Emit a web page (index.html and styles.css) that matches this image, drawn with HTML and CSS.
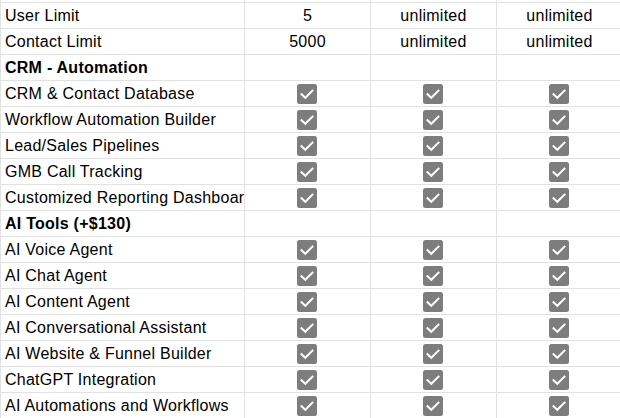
FILE: index.html
```html
<!DOCTYPE html>
<html>
<head>
<meta charset="utf-8">
<link rel="stylesheet" href="styles.css">
</head>
<body>
<svg class="defs" width="0" height="0" aria-hidden="true">
  <symbol id="chk" viewBox="0 0 20 20">
    <rect x="0" y="0" width="20" height="20" rx="2.5" fill="#7d7d7d"/>
    <polyline points="4.5,10.2 8.3,13.8 15.5,6.6" fill="none" stroke="#fff" stroke-width="2" stroke-linecap="square"/>
  </symbol>
</svg>
<div class="sheet">
  <div class="row stub"><div class="c"></div><div class="c"></div><div class="c"></div><div class="c"></div></div>
  <div class="row"><div class="c label">User Limit</div><div class="c val">5</div><div class="c val">unlimited</div><div class="c val">unlimited</div></div>
  <div class="row"><div class="c label">Contact Limit</div><div class="c val">5000</div><div class="c val">unlimited</div><div class="c val">unlimited</div></div>
  <div class="row"><div class="c label bold">CRM - Automation</div><div class="c"></div><div class="c"></div><div class="c"></div></div>
  <div class="row"><div class="c label">CRM &amp; Contact Database</div><div class="c val"><svg class="box"><use href="#chk"/></svg></div><div class="c val"><svg class="box"><use href="#chk"/></svg></div><div class="c val"><svg class="box"><use href="#chk"/></svg></div></div>
  <div class="row"><div class="c label">Workflow Automation Builder</div><div class="c val"><svg class="box"><use href="#chk"/></svg></div><div class="c val"><svg class="box"><use href="#chk"/></svg></div><div class="c val"><svg class="box"><use href="#chk"/></svg></div></div>
  <div class="row"><div class="c label">Lead/Sales Pipelines</div><div class="c val"><svg class="box"><use href="#chk"/></svg></div><div class="c val"><svg class="box"><use href="#chk"/></svg></div><div class="c val"><svg class="box"><use href="#chk"/></svg></div></div>
  <div class="row"><div class="c label">GMB Call Tracking</div><div class="c val"><svg class="box"><use href="#chk"/></svg></div><div class="c val"><svg class="box"><use href="#chk"/></svg></div><div class="c val"><svg class="box"><use href="#chk"/></svg></div></div>
  <div class="row"><div class="c label">Customized Reporting Dashboard</div><div class="c val"><svg class="box"><use href="#chk"/></svg></div><div class="c val"><svg class="box"><use href="#chk"/></svg></div><div class="c val"><svg class="box"><use href="#chk"/></svg></div></div>
  <div class="row"><div class="c label bold">AI Tools (+$130)</div><div class="c"></div><div class="c"></div><div class="c"></div></div>
  <div class="row"><div class="c label">AI Voice Agent</div><div class="c val"><svg class="box"><use href="#chk"/></svg></div><div class="c val"><svg class="box"><use href="#chk"/></svg></div><div class="c val"><svg class="box"><use href="#chk"/></svg></div></div>
  <div class="row"><div class="c label">AI Chat Agent</div><div class="c val"><svg class="box"><use href="#chk"/></svg></div><div class="c val"><svg class="box"><use href="#chk"/></svg></div><div class="c val"><svg class="box"><use href="#chk"/></svg></div></div>
  <div class="row"><div class="c label">AI Content Agent</div><div class="c val"><svg class="box"><use href="#chk"/></svg></div><div class="c val"><svg class="box"><use href="#chk"/></svg></div><div class="c val"><svg class="box"><use href="#chk"/></svg></div></div>
  <div class="row"><div class="c label">AI Conversational Assistant</div><div class="c val"><svg class="box"><use href="#chk"/></svg></div><div class="c val"><svg class="box"><use href="#chk"/></svg></div><div class="c val"><svg class="box"><use href="#chk"/></svg></div></div>
  <div class="row"><div class="c label">AI Website &amp; Funnel Builder</div><div class="c val"><svg class="box"><use href="#chk"/></svg></div><div class="c val"><svg class="box"><use href="#chk"/></svg></div><div class="c val"><svg class="box"><use href="#chk"/></svg></div></div>
  <div class="row"><div class="c label">ChatGPT Integration</div><div class="c val"><svg class="box"><use href="#chk"/></svg></div><div class="c val"><svg class="box"><use href="#chk"/></svg></div><div class="c val"><svg class="box"><use href="#chk"/></svg></div></div>
  <div class="row"><div class="c label">AI Automations and Workflows</div><div class="c val"><svg class="box"><use href="#chk"/></svg></div><div class="c val"><svg class="box"><use href="#chk"/></svg></div><div class="c val"><svg class="box"><use href="#chk"/></svg></div></div>
</div>
</body>
</html>
```

FILE: styles.css
```css
html, body {
  margin: 0;
  padding: 0;
  background: #fff;
  overflow: hidden;
}
body {
  width: 620px;
  height: 418px;
  font-family: "Liberation Sans", Arial, sans-serif;
  font-size: 16px;
  letter-spacing: 0.25px;
  color: #000;
}
.defs {
  position: absolute;
  width: 0;
  height: 0;
  overflow: hidden;
}
.sheet {
  width: 623px;
  border-left: 1px solid #e2e2e2;
}
.row {
  display: grid;
  grid-template-columns: 244px 126px 126px 126px;
  height: 26px;
}
.row.stub {
  height: 3px;
}
.c {
  border-right: 1px solid #e2e2e2;
  border-bottom: 1px solid #e2e2e2;
  display: flex;
  align-items: center;
  overflow: hidden;
  white-space: nowrap;
  min-width: 0;
  padding-top: 1px;
  box-sizing: border-box;
}
.label {
  padding-left: 4px;
}
.bold {
  font-weight: bold;
}
.val {
  justify-content: center;
  padding-top: 0;
}
.box {
  display: block;
  width: 20px;
  height: 20px;
  margin-left: -1px;
}
```
